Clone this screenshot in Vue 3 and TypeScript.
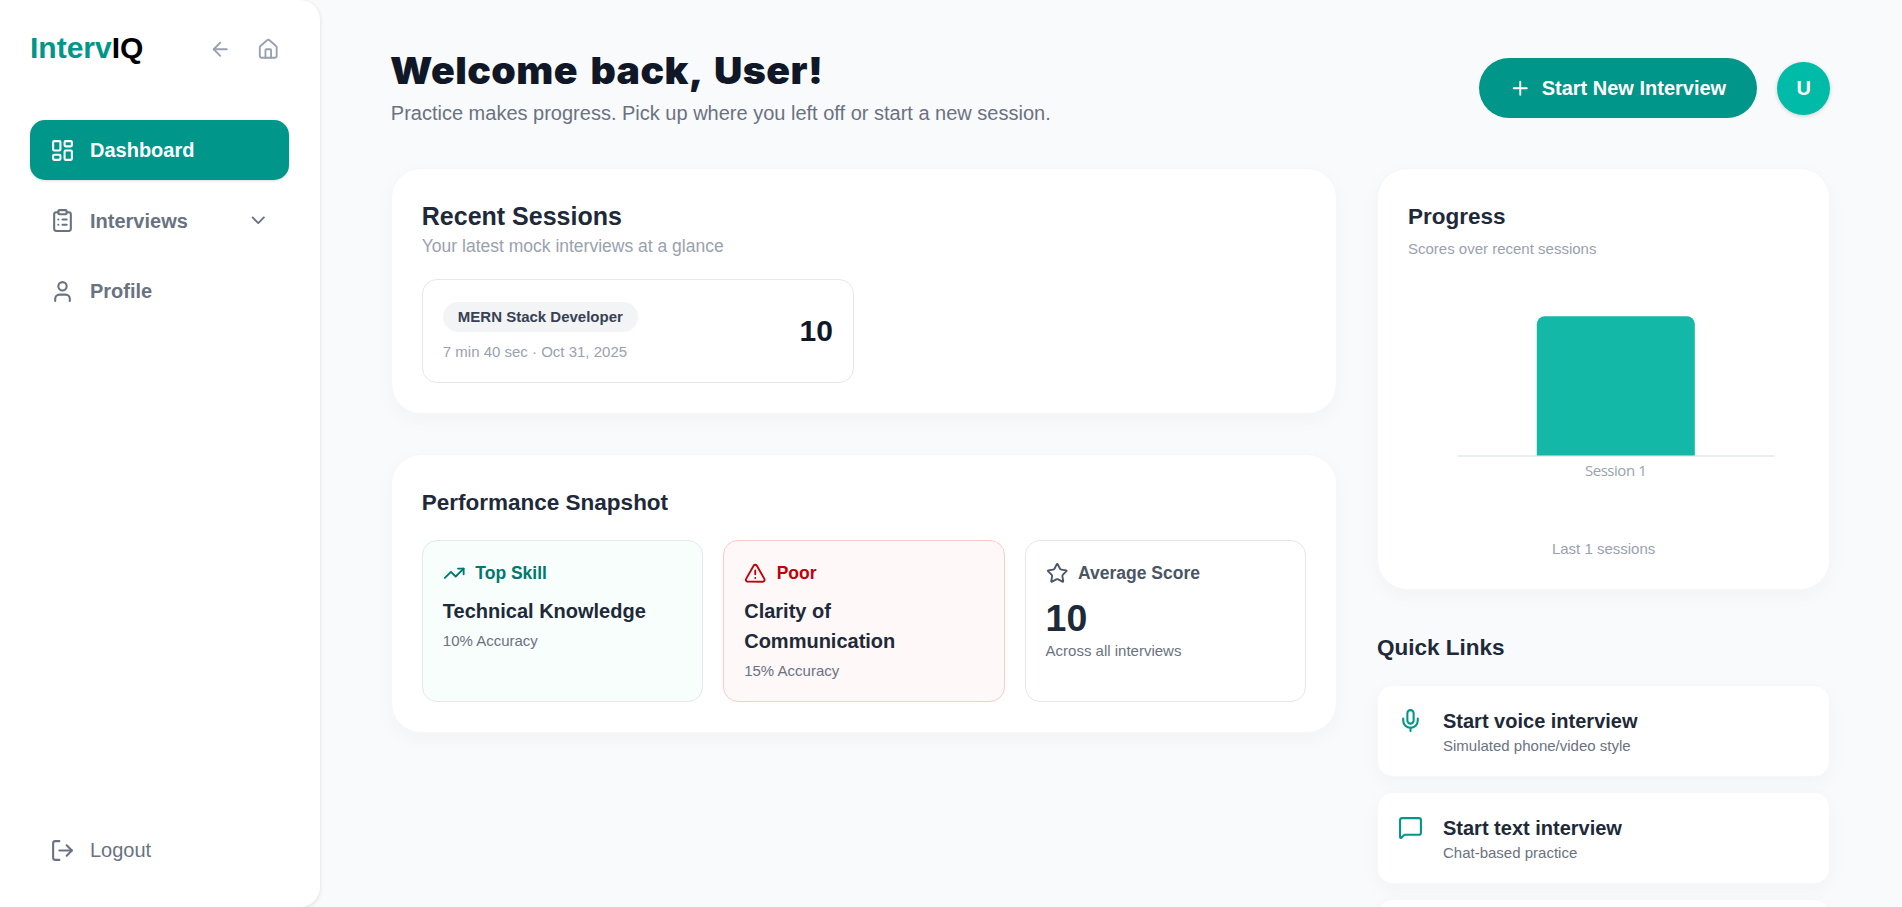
<script setup lang="ts">
interface Tile {
  kind: string
  label: string
  value: string
  note: string
  icon: string[]
}

interface QuickLink {
  title: string
  note: string
  icon: string[]
}

const icons: Record<string, string[]> = {
  arrowLeft: ['m12 19-7-7 7-7', 'M19 12H5'],
  home: [
    'M15 21v-8a1 1 0 0 0-1-1h-4a1 1 0 0 0-1 1v8',
    'M3 10a2 2 0 0 1 .709-1.528l7-5.999a2 2 0 0 1 2.582 0l7 5.999A2 2 0 0 1 21 10v9a2 2 0 0 1-2 2H5a2 2 0 0 1-2-2z',
  ],
  dashboard: [
    'M4 3h5a1 1 0 0 1 1 1v7a1 1 0 0 1-1 1H4a1 1 0 0 1-1-1V4a1 1 0 0 1 1-1z',
    'M15 3h5a1 1 0 0 1 1 1v3a1 1 0 0 1-1 1h-5a1 1 0 0 1-1-1V4a1 1 0 0 1 1-1z',
    'M15 12h5a1 1 0 0 1 1 1v7a1 1 0 0 1-1 1h-5a1 1 0 0 1-1-1v-7a1 1 0 0 1 1-1z',
    'M4 16h5a1 1 0 0 1 1 1v3a1 1 0 0 1-1 1H4a1 1 0 0 1-1-1v-3a1 1 0 0 1 1-1z',
  ],
  clipboard: [
    'M9 2h6a1 1 0 0 1 1 1v2a1 1 0 0 1-1 1H9a1 1 0 0 1-1-1V3a1 1 0 0 1 1-1z',
    'M16 4h2a2 2 0 0 1 2 2v14a2 2 0 0 1-2 2H6a2 2 0 0 1-2-2V6a2 2 0 0 1 2-2h2',
    'M12 11h4',
    'M12 16h4',
    'M8 11h.01',
    'M8 16h.01',
  ],
  user: ['M19 21v-2a4 4 0 0 0-4-4H9a4 4 0 0 0-4 4v2', 'M12 3a4 4 0 1 1 0 8a4 4 0 1 1 0-8z'],
  chevron: ['m6 9 6 6 6-6'],
  logout: ['m16 17 5-5-5-5', 'M21 12H9', 'M9 21H5a2 2 0 0 1-2-2V5a2 2 0 0 1 2-2h4'],
  plus: ['M5 12h14', 'M12 5v14'],
  trend: ['M16 7h6v6', 'm22 7-8.5 8.5-5-5L2 17'],
  alert: [
    'm21.73 18-8-14a2 2 0 0 0-3.48 0l-8 14A2 2 0 0 0 4 21h16a2 2 0 0 0 1.73-3',
    'M12 9v4',
    'M12 17h.01',
  ],
  star: [
    'M11.525 2.295a.53.53 0 0 1 .95 0l2.31 4.679a2.123 2.123 0 0 0 1.595 1.16l5.166.756a.53.53 0 0 1 .294.904l-3.736 3.638a2.123 2.123 0 0 0-.611 1.878l.882 5.14a.53.53 0 0 1-.771.56l-4.618-2.428a2.122 2.122 0 0 0-1.973 0L6.396 21.01a.53.53 0 0 1-.77-.56l.881-5.139a2.122 2.122 0 0 0-.611-1.879L2.16 9.795a.53.53 0 0 1 .294-.906l5.165-.755a2.122 2.122 0 0 0 1.597-1.16z',
  ],
  mic: ['M12 19v3', 'M19 10v2a7 7 0 0 1-14 0v-2', 'M12 2a3 3 0 0 1 3 3v7a3 3 0 0 1-6 0V5a3 3 0 0 1 3-3z'],
  message: [
    'M22 17a2 2 0 0 1-2 2H6.828a2 2 0 0 0-1.414.586l-2.202 2.202A.71.71 0 0 1 2 21.286V5a2 2 0 0 1 2-2h16a2 2 0 0 1 2 2z',
  ],
}

const nav = [
  { label: 'Dashboard', icon: icons.dashboard, active: true, expandable: false },
  { label: 'Interviews', icon: icons.clipboard, active: false, expandable: true },
  { label: 'Profile', icon: icons.user, active: false, expandable: false },
]

const tiles: Tile[] = [
  { kind: 'top', label: 'Top Skill', value: 'Technical Knowledge', note: '10% Accuracy', icon: icons.trend },
  { kind: 'poor', label: 'Poor', value: 'Clarity of Communication', note: '15% Accuracy', icon: icons.alert },
  { kind: 'avg', label: 'Average Score', value: '10', note: 'Across all interviews', icon: icons.star },
]

const links: QuickLink[] = [
  { title: 'Start voice interview', note: 'Simulated phone/video style', icon: icons.mic },
  { title: 'Start text interview', note: 'Chat-based practice', icon: icons.message },
]
</script>

<template>
  <div class="page">
    <aside class="sidebar">
      <div class="brand-row">
        <div class="brand"><span class="brand-accent">Interv</span>IQ</div>
        <div class="brand-actions">
          <button class="icon-btn" type="button">
            <svg class="icon sm" viewBox="0 0 24 24"><path v-for="d in icons.arrowLeft" :key="d" :d="d" /></svg>
          </button>
          <button class="icon-btn" type="button">
            <svg class="icon sm" viewBox="0 0 24 24"><path v-for="d in icons.home" :key="d" :d="d" /></svg>
          </button>
        </div>
      </div>
      <nav class="nav">
        <a v-for="item in nav" :key="item.label" class="nav-item" :class="{ active: item.active }">
          <svg class="icon" viewBox="0 0 24 24"><path v-for="d in item.icon" :key="d" :d="d" /></svg>
          <span class="nav-label">{{ item.label }}</span>
          <svg v-if="item.expandable" class="icon sm" viewBox="0 0 24 24">
            <path v-for="d in icons.chevron" :key="d" :d="d" />
          </svg>
        </a>
      </nav>
      <a class="nav-item logout">
        <svg class="icon" viewBox="0 0 24 24"><path v-for="d in icons.logout" :key="d" :d="d" /></svg>
        <span>Logout</span>
      </a>
    </aside>

    <main class="main">
      <div class="content">
        <header class="header">
          <div>
            <h1>Welcome back, User!</h1>
            <p class="lead">Practice makes progress. Pick up where you left off or start a new session.</p>
          </div>
          <div class="header-actions">
            <button class="start-btn" type="button">
              <svg class="icon sm" viewBox="0 0 24 24"><path v-for="d in icons.plus" :key="d" :d="d" /></svg>
              <span>Start New Interview</span>
            </button>
            <div class="avatar">U</div>
          </div>
        </header>

        <div class="columns">
          <div class="left">
            <section class="card">
              <h2 class="big">Recent Sessions</h2>
              <p class="sub">Your latest mock interviews at a glance</p>
              <div class="sessions">
                <div class="session">
                  <div class="session-info">
                    <span class="badge">MERN Stack Developer</span>
                    <span class="session-meta">7 min 40 sec · Oct 31, 2025</span>
                  </div>
                  <div class="score">10</div>
                </div>
              </div>
            </section>

            <section class="card">
              <h2>Performance Snapshot</h2>
              <div class="tiles">
                <div v-for="t in tiles" :key="t.kind" class="tile" :class="t.kind">
                  <div class="tile-head">
                    <svg class="icon sm" viewBox="0 0 24 24"><path v-for="d in t.icon" :key="d" :d="d" /></svg>
                    <span>{{ t.label }}</span>
                  </div>
                  <div class="tile-value">{{ t.value }}</div>
                  <div class="tile-note">{{ t.note }}</div>
                </div>
              </div>
            </section>
          </div>

          <div class="right">
            <section class="card progress">
              <h2>Progress</h2>
              <p class="small">Scores over recent sessions</p>
              <svg class="chart" width="391" height="280" viewBox="0 0 391 280">
                <path class="axis" d="M49.2 197H366.6" />
                <path class="bar" d="M128.8 196.5V65.2a8 8 0 0 1 8-8H278.8a8 8 0 0 1 8 8V196.5z" />
                <text class="tick" x="207.6" y="217" text-anchor="middle">Session 1</text>
              </svg>
              <p class="caption">Last 1 sessions</p>
            </section>

            <section class="quick">
              <h2>Quick Links</h2>
              <div class="links">
                <a v-for="l in links" :key="l.title" class="link">
                  <svg class="icon" viewBox="0 0 24 24"><path v-for="d in l.icon" :key="d" :d="d" /></svg>
                  <div>
                    <div class="link-title">{{ l.title }}</div>
                    <div class="link-note">{{ l.note }}</div>
                  </div>
                </a>
                <a class="link"></a>
              </div>
            </section>
          </div>
        </div>
      </div>
    </main>
  </div>
</template>

<style>
body {
  margin: 0;
  overflow: hidden;
  background: #f9fafb;
}
</style>

<style scoped>
* {
  box-sizing: border-box;
}
.page {
  display: flex;
  height: 907px;
  overflow: hidden;
  background: #f9fafb;
  color: #1e2939;
  font-family: "Liberation Sans", Arial, sans-serif;
  font-size: 20px;
  line-height: 30px;
}
h1,
h2,
p {
  margin: 0;
}
button {
  border: 0;
  background: none;
  font: inherit;
}
.icon {
  width: 25px;
  height: 25px;
  flex: none;
  fill: none;
  stroke: currentColor;
  stroke-width: 2;
  stroke-linecap: round;
  stroke-linejoin: round;
}
.icon.sm {
  width: 22.5px;
  height: 22.5px;
}

.sidebar {
  width: 320px;
  flex: none;
  display: flex;
  flex-direction: column;
  padding: 27px 31px 27px 30px;
  background: #fff;
  border-radius: 0 20px 20px 0;
  box-shadow: 0 1px 4px rgba(0, 0, 0, 0.12);
}
.brand-row {
  display: flex;
  align-items: center;
  justify-content: space-between;
  height: 44px;
  margin-bottom: 49px;
}
.brand {
  margin-bottom: 2px;
  font-size: 30px;
  line-height: 40px;
  font-weight: 700;
  color: #000;
}
.brand-accent {
  color: #009689;
}
.brand-actions {
  display: flex;
  gap: 5px;
}
.icon-btn {
  display: flex;
  padding: 10px;
  color: #99a1af;
}
.nav {
  display: flex;
  flex: 1;
  flex-direction: column;
  gap: 10.5px;
}
.nav-item {
  display: flex;
  align-items: center;
  gap: 15px;
  height: 60px;
  padding: 0 20px;
  border-radius: 15px;
  color: #6a7282;
  font-weight: 700;
}
.nav-label {
  flex: 1;
}
.nav-item.active {
  background: #009689;
  color: #fff;
  box-shadow: 0 1px 3px rgba(0, 0, 0, 0.14);
}
.logout {
  font-weight: 400;
}

.main {
  flex: 1;
  min-width: 0;
  padding: 48px 0 0 70.8px;
}
.content {
  width: 1439.4px;
}
.header {
  display: flex;
  align-items: center;
  justify-content: space-between;
  margin-bottom: 40px;
}
h1 {
  height: 45px;
  margin: 0 0 5px -1px;
  color: #101828;
  font-family: Inter, "Liberation Sans", sans-serif;
  font-size: 37.5px;
  line-height: 46px;
  font-weight: 900;
  letter-spacing: 0.4px;
  word-spacing: 4px;
  transform: scaleX(1.047);
  transform-origin: left;
}
.lead {
  color: #6a7282;
}
.header-actions {
  display: flex;
  align-items: center;
  gap: 20.5px;
}
.start-btn {
  display: flex;
  align-items: center;
  gap: 10px;
  height: 60px;
  padding: 0 30.5px;
  border-radius: 30px;
  background: #009689;
  color: #fff;
  font-weight: 700;
}
.avatar {
  display: flex;
  align-items: center;
  justify-content: center;
  width: 53px;
  height: 53px;
  border-radius: 50%;
  background: #00bba7;
  color: #fff;
  font-weight: 700;
  box-shadow: 0 1px 4px rgba(0, 0, 0, 0.18);
}

.columns {
  display: grid;
  grid-template-columns: minmax(0, 946.2fr) minmax(0, 453.2fr);
  gap: 40px;
  align-items: start;
}
.left {
  display: flex;
  flex-direction: column;
  gap: 40px;
}
.card {
  padding: 30px;
  border: 1px solid #f6f7f9;
  border-radius: 30px;
  background: #fff;
  box-shadow: 0 6px 20px rgba(0, 0, 0, 0.03);
}
h2 {
  font-size: 22.5px;
  line-height: 35px;
  font-weight: 700;
}
h2.big {
  font-size: 25px;
}
.sub {
  color: #99a1af;
  font-size: 17.5px;
  line-height: 25px;
}
.small {
  margin-top: 5px;
  color: #99a1af;
  font-size: 15px;
  line-height: 20px;
}
.sessions {
  display: grid;
  grid-template-columns: 1fr 1fr;
  gap: 20px;
  margin-top: 20px;
}
.session {
  display: flex;
  align-items: center;
  justify-content: space-between;
  height: 104px;
  padding: 0 20px;
  border: 1px solid #e5e7eb;
  border-radius: 15px;
}
.session-info {
  display: flex;
  flex-direction: column;
  align-items: flex-start;
  gap: 10px;
  padding-top: 2px;
}
.badge {
  padding: 5px 15px;
  border-radius: 15px;
  background: #f3f4f6;
  color: #364153;
  font-size: 15px;
  line-height: 20px;
  font-weight: 700;
}
.session-meta {
  color: #99a1af;
  font-size: 15px;
  line-height: 20px;
}
.score {
  color: #101828;
  font-size: 30px;
  line-height: 40px;
  font-weight: 700;
}
.tiles {
  display: grid;
  grid-template-columns: repeat(3, minmax(0, 1fr));
  gap: 20px;
  margin-top: 20px;
}
.tile {
  min-height: 162px;
  padding: 20px;
  border: 1px solid #e5e7eb;
  border-radius: 15px;
}
.tile-head {
  display: flex;
  align-items: center;
  gap: 10px;
  margin-bottom: 10px;
  font-size: 17.5px;
  line-height: 25px;
  font-weight: 700;
}
.tile-value {
  font-weight: 700;
}
.tile-note {
  margin-top: 5px;
  color: #6a7282;
  font-size: 15px;
  line-height: 20px;
}
.tile.top {
  background: #f8fefc;
}
.top .tile-head {
  color: #00786f;
}
.tile.poor {
  border-color: #ffc9c9;
  background: #fef8f8;
}
.poor .tile-head {
  color: #c10007;
}
.avg .tile-head {
  color: #4a5565;
}
.avg .tile-value {
  font-size: 37.5px;
  line-height: 45px;
}
.avg .tile-note {
  margin-top: 0;
}

.chart {
  display: block;
}
.axis {
  stroke: #e5e7eb;
  stroke-width: 1.4;
}
.bar {
  fill: #14b8a6;
}
.tick {
  fill: #99a1af;
  font-family: "Open Sans", "Noto Sans", sans-serif;
  font-size: 15px;
  letter-spacing: -0.45px;
}
.caption {
  color: #99a1af;
  font-size: 15px;
  line-height: 20px;
  text-align: center;
}
.quick {
  margin-top: 40px;
}
.links {
  display: flex;
  flex-direction: column;
  gap: 15px;
  margin-top: 20px;
}
.link {
  display: flex;
  gap: 20px;
  height: 92px;
  padding: 20px;
  border: 1px solid #f6f7f9;
  border-radius: 15px;
  background: #fff;
  box-shadow: 0 6px 20px rgba(0, 0, 0, 0.03);
}
.link .icon {
  margin-top: 2px;
  color: #009689;
}
.link-title {
  font-weight: 700;
}
.link-note {
  color: #6a7282;
  font-size: 15px;
  line-height: 20px;
}
</style>
